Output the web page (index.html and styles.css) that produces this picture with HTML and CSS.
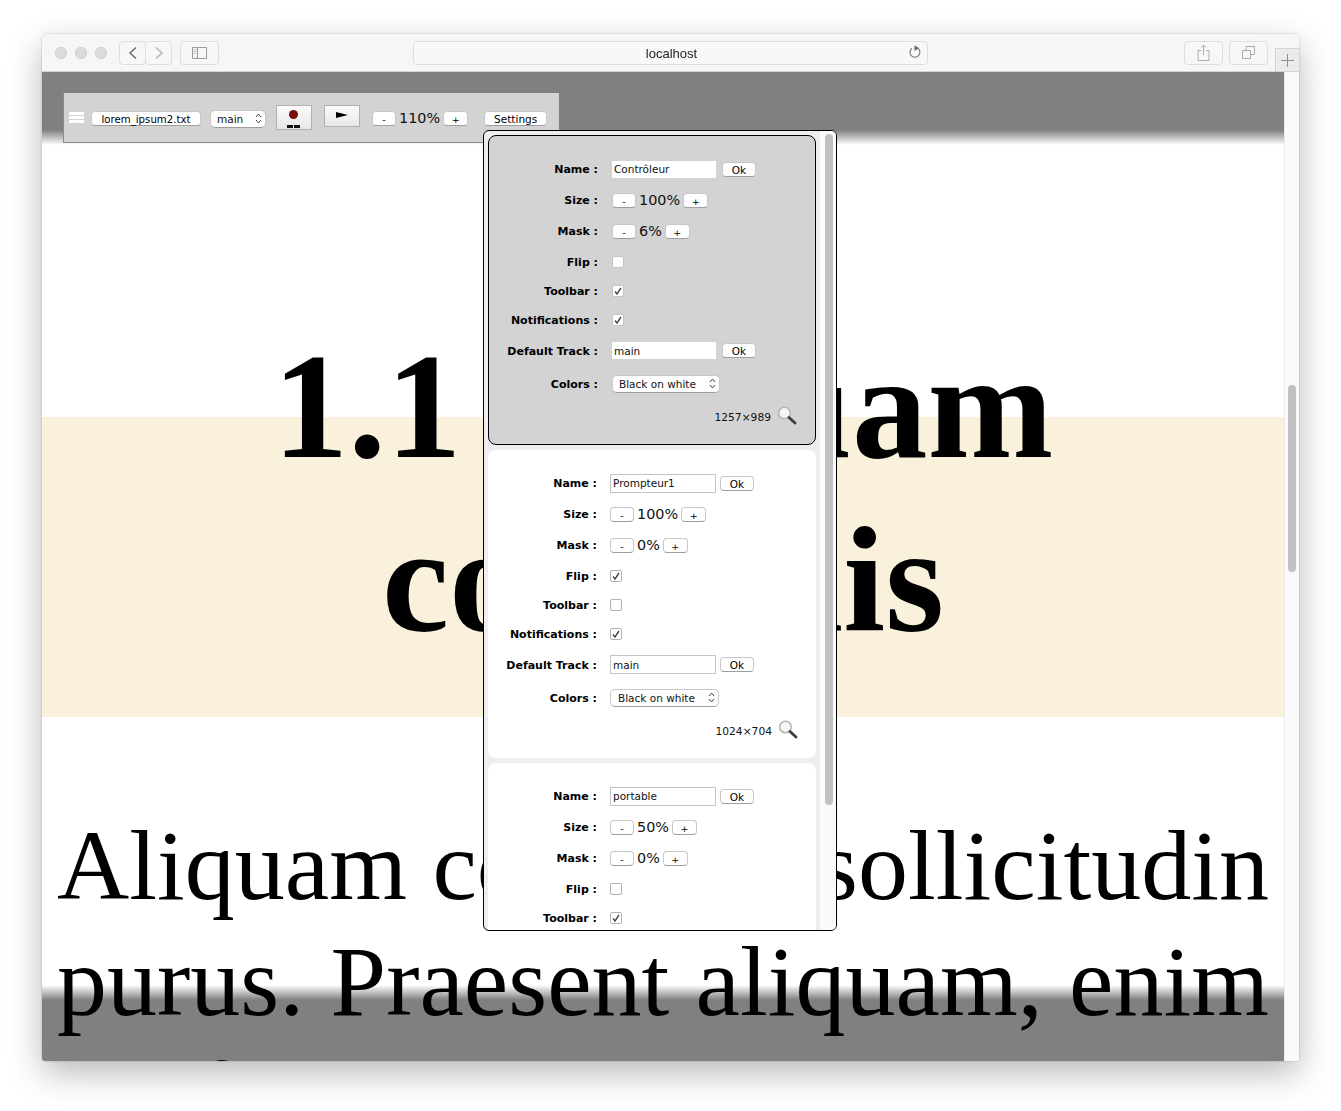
FILE: index.html

```html
<!DOCTYPE html>
<html lang="en">
<head>
    <meta charset="UTF-8">
    <title>localhost</title>
    <link rel="stylesheet" href="styles.css">
</head>
<body>

<div class="window">
    <div class="chrome">
        <span class="light"></span><span class="light"></span><span class="light"></span>
        <div class="nav-group">
            <span class="cbtn nav"><svg width="10" height="16" viewBox="0 0 10 16"><path d="M8 2.500 2 8l6 5.500" fill="none" stroke="#6e6e6e" stroke-width="1.500"/></svg></span>
            <span class="cbtn nav"><svg width="10" height="16" viewBox="0 0 10 16"><path d="M2 2.500 8 8l-6 5.500" fill="none" stroke="#b4b4b4" stroke-width="1.500"/></svg></span>
        </div>
        <span class="cbtn sidebar"><svg width="15" height="12" viewBox="0 0 15 12"><path d="M.5.5h14v11H.5zM5.500.5v11" fill="none" stroke="#9a9a9a"/><path d="M1.500 2.500h3M1.500 4.500h3M1.500 6.500h3" stroke="#c4c4c4"/></svg></span>
        <div class="address">
            <span>localhost</span>
            <svg class="reload" width="14" height="15" viewBox="0 0 14 15"><path d="M9.500 3A5 5 0 1 1 4 3.200" fill="none" stroke="#777" stroke-width="1.100"/><path d="M6.500 0.500 11 3 6.500 6z" fill="#666"/></svg>
        </div>
        <span class="cbtn share"><svg width="13" height="17" viewBox="0 0 13 17"><path d="M4 6.500H1v10h11v-10H9M6.500 1v10M4 3.500 6.500 1 9 3.500" fill="none" stroke="#aaa"/></svg></span>
        <span class="cbtn tabs"><svg width="13" height="13" viewBox="0 0 13 13"><path d="M.5 4.500h8v8h-8zM4 4.500V.5h8.500v8H8.500" fill="none" stroke="#aaa"/></svg></span>
        <span class="new-tab"><svg width="13" height="13" viewBox="0 0 13 13"><path d="M6.500 0v13M0 6.500h13" stroke="#8e8e8e"/></svg></span>
    </div>

    <div class="viewport">
        <div class="page">
            <div class="band"></div>
            <h1>1.1 Aliquam<br>convallis</h1>
            <p>Aliquam convallis sollicitudin purus. Praesent aliquam, enim at fermentum mollis, ligula</p>
        </div>
        <div class="mask-top"></div>
        <div class="mask-bottom"></div>

        <div class="toolbar">
            <span class="burger"><i></i><i></i><i></i></span>
            <button class="btn file">lorem_ipsum2.txt</button>
            <span class="sel track">main<svg class="updown" width="7" height="11" viewBox="0 0 7 11"><path d="M1 4 3.500 1 6 4M1 7l2.500 3L6 7" fill="none" stroke="#444"/></svg></span>
            <span class="big rec"><b class="dot"></b><b class="dashes"><i></i><i></i></b></span>
            <span class="big play"><b class="tri"></b></span>
            <button class="btn step">-</button>
            <span class="pct">110%</span>
            <button class="btn step plus">+</button>
            <button class="btn settings">Settings</button>
        </div>

        <div class="panel">
            <div class="cards">
                <div class="card current">
                    <div class="row r-field"><label>Name :</label><input class="txt" value="Contrôleur"><button class="btn ok">Ok</button></div>
                    <div class="row r-step"><label>Size :</label><button class="btn step">-</button><span class="pct">100%</span><button class="btn step plus">+</button></div>
                    <div class="row r-step"><label>Mask :</label><button class="btn step">-</button><span class="pct">6%</span><button class="btn step plus">+</button></div>
                    <div class="row r-check"><label>Flip :</label><span class="check"></span></div>
                    <div class="row r-check"><label>Toolbar :</label><span class="check"><svg width="8" height="8" viewBox="0 0 8 8"><path d="M1 4.500 3 7l4-6" fill="none" stroke="#444" stroke-width="1.400"/></svg></span></div>
                    <div class="row r-check"><label>Notifications :</label><span class="check"><svg width="8" height="8" viewBox="0 0 8 8"><path d="M1 4.500 3 7l4-6" fill="none" stroke="#444" stroke-width="1.400"/></svg></span></div>
                    <div class="row r-select"><label>Default Track :</label><input class="txt" value="main"><button class="btn ok">Ok</button></div>
                    <div class="row r-select"><label>Colors :</label><span class="sel colors">Black on white<svg class="updown" width="7" height="11" viewBox="0 0 7 11"><path d="M1 4 3.500 1 6 4M1 7l2.500 3L6 7" fill="none" stroke="#444"/></svg></span></div>
                    <div class="foot"><span>1257×989</span><svg width="20" height="19" viewBox="0 0 20 19"><circle cx="7.500" cy="7" r="5.800" fill="#f4f6f8" stroke="#b4b4b4" stroke-width="1.500"/><path d="M12 11.500l6 5.500" stroke="#3c3c3c" stroke-width="2.800" stroke-linecap="round"/></svg></div>
                </div>

                <div class="card">
                    <div class="row r-field"><label>Name :</label><input class="txt" value="Prompteur1"><button class="btn ok">Ok</button></div>
                    <div class="row r-step"><label>Size :</label><button class="btn step">-</button><span class="pct">100%</span><button class="btn step plus">+</button></div>
                    <div class="row r-step"><label>Mask :</label><button class="btn step">-</button><span class="pct">0%</span><button class="btn step plus">+</button></div>
                    <div class="row r-check"><label>Flip :</label><span class="check"><svg width="8" height="8" viewBox="0 0 8 8"><path d="M1 4.500 3 7l4-6" fill="none" stroke="#444" stroke-width="1.400"/></svg></span></div>
                    <div class="row r-check"><label>Toolbar :</label><span class="check"></span></div>
                    <div class="row r-check"><label>Notifications :</label><span class="check"><svg width="8" height="8" viewBox="0 0 8 8"><path d="M1 4.500 3 7l4-6" fill="none" stroke="#444" stroke-width="1.400"/></svg></span></div>
                    <div class="row r-select"><label>Default Track :</label><input class="txt" value="main"><button class="btn ok">Ok</button></div>
                    <div class="row r-select"><label>Colors :</label><span class="sel colors">Black on white<svg class="updown" width="7" height="11" viewBox="0 0 7 11"><path d="M1 4 3.500 1 6 4M1 7l2.500 3L6 7" fill="none" stroke="#444"/></svg></span></div>
                    <div class="foot"><span>1024×704</span><svg width="20" height="19" viewBox="0 0 20 19"><circle cx="7.500" cy="7" r="5.800" fill="#f4f6f8" stroke="#b4b4b4" stroke-width="1.500"/><path d="M12 11.500l6 5.500" stroke="#3c3c3c" stroke-width="2.800" stroke-linecap="round"/></svg></div>
                </div>

                <div class="card">
                    <div class="row r-field"><label>Name :</label><input class="txt" value="portable"><button class="btn ok">Ok</button></div>
                    <div class="row r-step"><label>Size :</label><button class="btn step">-</button><span class="pct">50%</span><button class="btn step plus">+</button></div>
                    <div class="row r-step"><label>Mask :</label><button class="btn step">-</button><span class="pct">0%</span><button class="btn step plus">+</button></div>
                    <div class="row r-check"><label>Flip :</label><span class="check"></span></div>
                    <div class="row r-check"><label>Toolbar :</label><span class="check"><svg width="8" height="8" viewBox="0 0 8 8"><path d="M1 4.500 3 7l4-6" fill="none" stroke="#444" stroke-width="1.400"/></svg></span></div>
                </div>
            </div>
            <div class="panel-bar"><div class="panel-thumb"></div></div>
        </div>

        <div class="page-bar"><div class="page-thumb"></div></div>
    </div>
</div>

</body>
</html>
```

FILE: styles.css

```css
html, body {
    margin: 0;
    height: 1111px;
    overflow: hidden;
    background-color: #fff;
}
body {
    padding: 34px 42px 0;
    box-sizing: border-box;
    height: 1111px;
    font-family: "DejaVu Sans", Verdana, sans-serif;
}
.window {
    width: 1257px;
    height: 1027px;
    border-radius: 5px 5px 3px 3px;
    box-shadow: 0 12px 34px rgba(0, 0, 0, 0.28), 0 0 2px rgba(0, 0, 0, 0.25);
    overflow: hidden;
    display: flex;
    flex-direction: column;
}

/* browser chrome */
.chrome {
    height: 37px;
    flex: none;
    position: relative;
    display: flex;
    align-items: center;
    background-color: #f6f6f6;
    border-bottom: 1px solid #d4d4d4;
    padding-left: 13px;
}
.light {
    width: 12px;
    height: 12px;
    border-radius: 50%;
    background-color: #dcdcdc;
    box-shadow: inset 0 0 0 1px #d2d2d2;
    margin-right: 8px;
}
.cbtn {
    display: flex;
    align-items: center;
    justify-content: center;
    box-sizing: border-box;
    height: 24px;
    background-color: #f7f7f7;
    border: 1px solid #dedede;
    border-radius: 4px;
}
.nav-group {
    display: flex;
    margin-left: 4px;
}
.nav {
    width: 27px;
}
.nav + .nav {
    margin-left: -1px;
}
.sidebar {
    width: 39px;
    margin-left: 8px;
}
.address {
    width: 515px;
    height: 24px;
    box-sizing: border-box;
    margin-left: 194px;
    padding: 1px 0 0 2px;
    position: relative;
    display: flex;
    align-items: center;
    justify-content: center;
    border: 1px solid #dedede;
    border-radius: 4px;
    background-color: #f8f8f8;
    font-family: "Liberation Sans", Arial, sans-serif;
    font-size: 13px;
    color: #222;
}
.reload {
    position: absolute;
    right: 5px;
    top: 3px;
}
.share {
    width: 39px;
    margin-left: 256px;
}
.tabs {
    width: 39px;
    margin-left: 6px;
}
.new-tab {
    position: absolute;
    right: 0;
    bottom: 0;
    width: 24px;
    height: 23px;
    box-sizing: border-box;
    background-color: #ebebeb;
    border: 1px solid #d4d4d4;
    border-right: 0;
    border-bottom: 0;
    display: flex;
    align-items: center;
    justify-content: center;
}

/* page */
.viewport {
    position: relative;
    flex: 1;
    overflow: hidden;
    background-color: #fff;
}
.page {
    width: 1242px;
    height: 100%;
    overflow: hidden;
    color: #000;
    font-family: "Liberation Serif", "Times New Roman", serif;
    text-align: center;
}
.band {
    position: absolute;
    left: 0;
    top: 345px;
    width: 1242px;
    height: 300px;
    background-color: #faf1dc;
}
.page h1 {
    position: relative;
    margin: 0;
    padding-top: 247px;
    font-size: 151px;
    line-height: 174px;
    font-weight: bold;
}
.page p {
    position: relative;
    margin: 0;
    padding: 141px 15px 0;
    font-size: 100px;
    line-height: 116px;
    text-align: justify;
    text-align-last: justify;
}
.mask-top, .mask-bottom {
    position: absolute;
    left: 0;
    width: 1242px;
}
.mask-top {
    top: 0;
    height: 73px;
    background: linear-gradient(to bottom, #808080 0, #808080 58px, rgba(128, 128, 128, 0) 73px);
}
.mask-bottom {
    bottom: 0;
    height: 76px;
    background: linear-gradient(to top, #808080 0, #808080 61px, rgba(128, 128, 128, 0) 76px);
    mix-blend-mode: multiply;
}
.page-bar {
    position: absolute;
    right: 0;
    top: 0;
    bottom: 0;
    width: 15px;
    background-color: #fafafa;
    border-left: 1px solid #ececec;
    box-sizing: border-box;
}
.page-thumb {
    position: absolute;
    left: 3px;
    top: 313px;
    width: 8px;
    height: 187px;
    border-radius: 4px;
    background-color: #c1c1c1;
}

/* floating toolbar */
.toolbar {
    position: absolute;
    left: 21px;
    top: 21px;
    width: 496px;
    height: 50px;
    box-sizing: border-box;
    display: flex;
    align-items: center;
    padding: 2px 0 0 5px;
    background-color: #d3d3d3;
    border-left: 1px solid #8c8c8c;
    border-bottom: 1px solid #8c8c8c;
    font-size: 11px;
}
.burger {
    width: 15px;
    display: flex;
    flex-direction: column;
    gap: 1px;
    margin: -2px 7px 0 0;
}
.burger i {
    height: 3px;
    background-color: #fff;
}
.btn {
    box-sizing: border-box;
    height: 15px;
    padding: 1px 0 0;
    border: 1px solid #c8c8c8;
    border-bottom-color: #9e9e9e;
    border-radius: 4px;
    background-color: #fff;
    font-family: "DejaVu Sans", Verdana, sans-serif;
    font-size: 10.500px;
    line-height: 13px;
    color: #000;
}
.file {
    width: 110px;
    margin-right: 9px;
    font-size: 10.200px;
}
.sel {
    position: relative;
    box-sizing: border-box;
    display: block;
    height: 18px;
    line-height: 16px;
    border: 1px solid #c8c8c8;
    border-bottom-color: #9e9e9e;
    border-radius: 5px;
    background-color: #fff;
    font-size: 10.500px;
    color: #111;
}
.updown {
    position: absolute;
    right: 3px;
    top: 2px;
}
.track {
    width: 56px;
    padding-left: 6px;
    margin-right: 10px;
}
.big {
    position: relative;
    box-sizing: border-box;
    display: block;
    width: 36px;
    border: 1px solid #b0b0b0;
    background: linear-gradient(to bottom, #fbfbfb, #e7e7e7);
}
.rec {
    height: 25px;
    margin-top: -2px;
    margin-right: 12px;
}
.play {
    height: 22px;
    margin-top: -5px;
    margin-right: 12px;
}
.dot {
    position: absolute;
    left: 12px;
    top: 4px;
    width: 9px;
    height: 9px;
    border-radius: 50%;
    background-color: #7a0c0c;
}
.dashes {
    position: absolute;
    left: 10px;
    bottom: 1px;
    display: flex;
    gap: 1px;
}
.dashes i {
    width: 6px;
    height: 3px;
    background-color: #111;
}
.tri {
    position: absolute;
    left: 11px;
    top: 6px;
    border-left: 12px solid #000;
    border-top: 3.500px solid transparent;
    border-bottom: 3.500px solid transparent;
}
.step {
    width: 24px;
    font-size: 9.500px;
}
.step.plus {
    width: 25px;
}
.pct {
    font-size: 14.400px;
    line-height: 14px;
    margin: 0 3px;
    color: #111;
    position: relative;
    top: -1px;
}
.settings {
    width: 63px;
    margin-left: 16px;
}

/* settings panel */
.panel {
    position: absolute;
    left: 441px;
    top: 58px;
    width: 354px;
    height: 801px;
    box-sizing: border-box;
    border: 1px solid #000;
    border-radius: 6px;
    background-color: #eee;
    overflow: hidden;
}
.cards {
    width: 333px;
    padding: 4px 0 0 4px;
    display: flex;
    flex-direction: column;
    gap: 5px;
}
.card {
    flex: none;
    box-sizing: border-box;
    width: 328px;
    height: 308px;
    padding-top: 17px;
    background-color: #fff;
    border-radius: 8px;
}
.card.current {
    height: 310px;
    background-color: #d3d3d3;
    border: 1px solid #000;
}
.row {
    display: flex;
    align-items: center;
}
.row label {
    width: 109px;
    flex: none;
    margin-right: 13px;
    text-align: right;
    font-size: 11px;
    font-weight: bold;
    color: #000;
    white-space: nowrap;
}
.r-check label, .r-select label {
    padding-top: 2px;
}
.r-field {
    height: 32px;
}
.r-step {
    height: 31px;
}
.r-check {
    height: 29px;
}
.r-select {
    height: 33px;
}
.txt {
    box-sizing: border-box;
    width: 106px;
    height: 19px;
    padding: 0 2px;
    border: 1px solid #c4c4c4;
    background-color: #fff;
    font-family: "DejaVu Sans", Verdana, sans-serif;
    font-size: 10.500px;
    color: #111;
    outline: none;
}
.current .txt {
    border-color: #d3d3d3;
}
.ok {
    width: 34px;
    margin-left: 4px;
}
.current .ok {
    margin-left: 5px;
}
.current .row > .step:first-of-type, .current .check, .current .sel {
    margin-left: 1px;
}
.check {
    box-sizing: border-box;
    width: 12px;
    height: 12px;
    border: 1px solid #b0b0b0;
    border-radius: 2px;
    background-color: #fff;
    display: flex;
    align-items: center;
    justify-content: center;
}
.current .check {
    border-color: #c4c4c4;
}
.colors {
    width: 109px;
    padding-left: 7px;
}
.current .colors {
    width: 108px;
    padding-left: 6px;
}
.foot {
    box-sizing: border-box;
    height: 32px;
    padding: 2px 18px 0 0;
    display: flex;
    align-items: center;
    justify-content: flex-end;
    gap: 6px;
    font-size: 10.700px;
    color: #111;
}
.foot svg {
    margin-top: -4px;
}
.panel-bar {
    position: absolute;
    right: 0;
    top: 0;
    bottom: 0;
    width: 16px;
    background-color: #fafafa;
}
.panel-thumb {
    position: absolute;
    left: 5px;
    top: 3px;
    width: 8px;
    height: 671px;
    border-radius: 4px;
    background-color: #c1c1c1;
}
```
